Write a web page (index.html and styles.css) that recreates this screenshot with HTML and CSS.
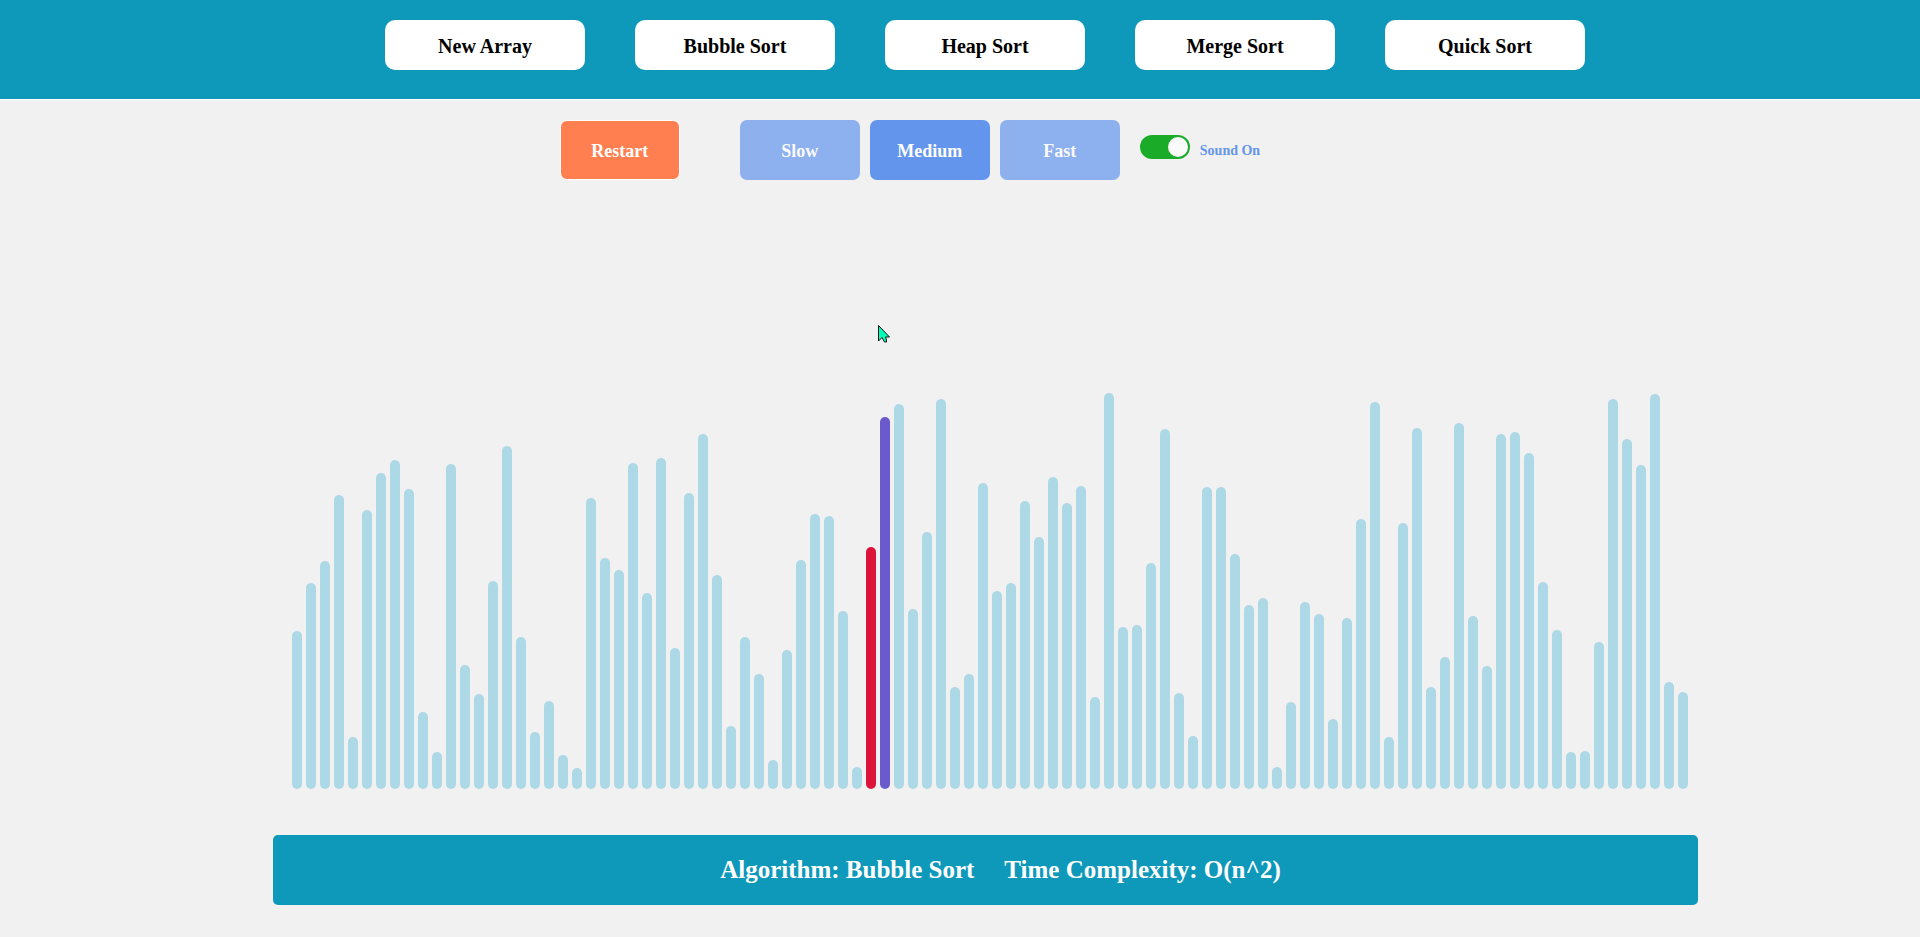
FILE: index.html
```html
<!DOCTYPE html>
<html lang="en">
<head>
  <meta charset="utf-8">
  <meta name="viewport" content="width=device-width, initial-scale=1">
  <title>Sorting Visualizer</title>
  <link rel="stylesheet" href="styles.css">
</head>
<body>
  <header class="navbar">
    <button type="button" class="nav-button">New Array</button>
    <button type="button" class="nav-button">Bubble Sort</button>
    <button type="button" class="nav-button">Heap Sort</button>
    <button type="button" class="nav-button">Merge Sort</button>
    <button type="button" class="nav-button">Quick Sort</button>
  </header>

  <section class="controls">
    <button type="button" class="restart">Restart</button>
    <div class="speeds">
      <button type="button" class="speed">Slow</button>
      <button type="button" class="speed speed-active">Medium</button>
      <button type="button" class="speed">Fast</button>
    </div>
    <div class="sound">
      <input type="checkbox" class="switch" id="sound" checked>
      <label class="sound-label" for="sound">Sound On</label>
    </div>
  </section>

  <main class="chart" id="chart"></main>

  <footer class="info">
    <span>Algorithm: Bubble Sort</span>
    <span>Time Complexity: O(n^2)</span>
  </footer>

  <svg class="pointer" viewBox="0 0 15 20" width="15" height="20" aria-hidden="true">
    <path d="M1.500 1.500V17L5 13.500L7.500 18H9.500V16L8.500 13H12.500Z" fill="#00ffb9" stroke="#111" stroke-width="1"/>
  </svg>

  <script src="script.js"></script>
</body>
</html>
```
FILE: styles.css
```css
* {
  box-sizing: border-box;
}

body {
  display: flex;
  flex-direction: column;
  min-height: 100vh;
  margin: 0;
  background: #f1f1f1;
  font-family: "Liberation Serif", "Times New Roman", serif;
  font-weight: bold;
}

button {
  font: inherit;
  border: 0;
  padding: 2px 0 0;
  cursor: pointer;
}

.navbar {
  display: flex;
  justify-content: center;
  gap: 50px;
  padding: 20px 0 29px 50px;
  background: #0e98ba;
  border-bottom: 1px solid #fff;
}

.nav-button {
  width: 200px;
  height: 50px;
  border-radius: 10px;
  background: #fff;
  color: #000;
  font-size: 20px;
}

.controls {
  display: flex;
  justify-content: center;
  align-items: center;
  padding: 20px 100px 20px 0;
  color: #fff;
}

.restart,
.speed {
  width: 120px;
  height: 60px;
  border-radius: 7px;
  color: #fff;
  font-size: 18px;
}

.restart {
  margin-right: 60px;
  border: 1px solid #fff;
  background: coral;
}

.speeds {
  display: flex;
  gap: 10px;
}

.speed {
  background: cornflowerblue;
  opacity: 0.7;
}

.speed-active {
  opacity: 1;
}

.sound {
  display: flex;
  align-items: center;
  gap: 10px;
  margin-left: 20px;
}

.switch {
  appearance: none;
  display: flex;
  width: 50px;
  height: 24px;
  margin: 0 0 6px;
  padding: 2px;
  border-radius: 12px;
  background: #999;
  cursor: pointer;
}

.switch::before {
  content: "";
  width: 20px;
  height: 20px;
  border-radius: 50%;
  background: #fafafa;
}

.switch:checked {
  justify-content: flex-end;
  background: #1aab29;
}

.sound-label {
  padding-top: 2px;
  color: cornflowerblue;
  font-size: 14px;
}

.chart {
  display: flex;
  flex: 1;
  justify-content: center;
  align-items: flex-end;
  gap: 4px;
  padding-left: 60px;
}

.bar {
  flex: 0 1 10px;
  border-radius: 5px;
  background: lightblue;
}

.bar-current {
  background: crimson;
}

.bar-compared {
  background: slateblue;
}

.info {
  display: flex;
  justify-content: center;
  align-items: center;
  gap: 30px;
  width: calc(100% - 495px);
  min-height: 70px;
  margin: 46px 222px 32px 273px;
  padding-left: 30px;
  border-radius: 5px;
  background: #0e98ba;
  color: #fff;
  font-size: 25px;
}

.pointer {
  position: absolute;
  left: 877px;
  top: 324px;
  pointer-events: none;
}
```
FILE: script.js
```js
const values = [
  158, 206, 228, 294, 52, 279, 316, 329, 300, 77,
  37, 325, 124, 95, 208, 343, 152, 57, 88, 34,
  21, 291, 231, 219, 326, 196, 331, 141, 296, 355,
  214, 63, 152, 115, 29, 139, 229, 275, 273, 178,
  22, 242, 372, 385, 180, 257, 390, 102, 115, 306,
  198, 206, 288, 252, 312, 286, 303, 92, 396, 162,
  164, 226, 360, 96, 53, 302, 302, 235, 184, 191,
  22, 87, 187, 175, 70, 171, 270, 387, 52, 266,
  361, 102, 132, 366, 173, 123, 355, 357, 336, 207,
  159, 37, 38, 147, 390, 350, 324, 395, 107, 97
];
const current = 41;
const compared = 42;

const chart = document.getElementById("chart");

values.forEach((value, index) => {
  const bar = document.createElement("div");
  bar.className = "bar";
  if (index === current) bar.classList.add("bar-current");
  if (index === compared) bar.classList.add("bar-compared");
  bar.style.height = `${value}px`;
  chart.appendChild(bar);
});
```
